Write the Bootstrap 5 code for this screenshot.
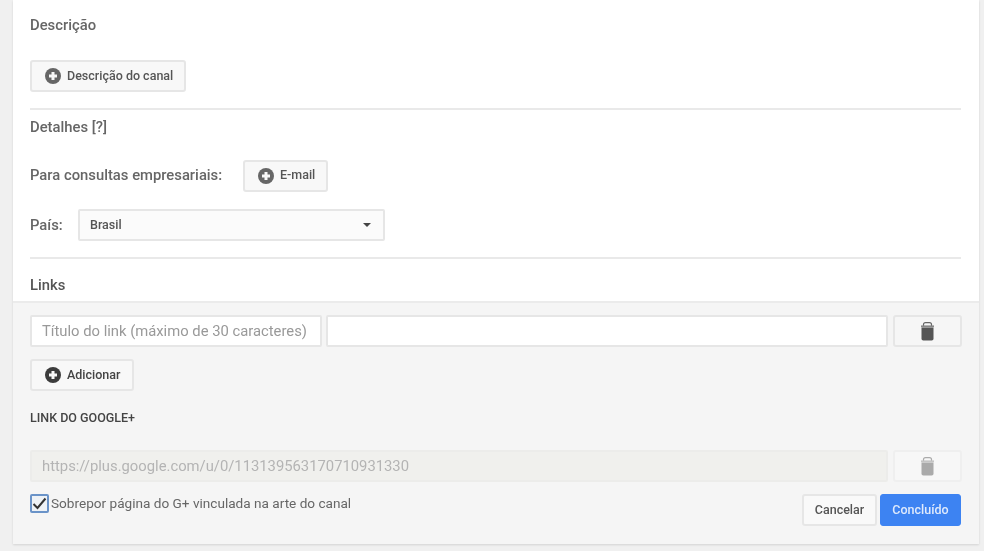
<!DOCTYPE html>
<html lang="pt-BR">
<head>
<meta charset="utf-8">
<title>Canal</title>
<link href="https://cdn.jsdelivr.net/npm/bootstrap@5.3.0/dist/css/bootstrap.min.css" rel="stylesheet">
<style>
html,body{height:100%;overflow:hidden}
body{background:#f0f0f0;font-family:Roboto,"Liberation Sans",sans-serif;color:#555;font-size:14px}
.shell{margin:0 5px 0 13px;height:544px;display:flex;flex-direction:column;box-shadow:0 1px 2px rgba(0,0,0,.12);filter:blur(.5px)}
.upper{background:#fff;height:303px;padding:0 18px 0 17px;border-bottom:2px solid #ebebeb;flex:none}
.lower{background:#f5f5f5;flex:1;padding:12px 17px 0 17px}
.head{font-size:14.8px;font-weight:500;color:#666;line-height:20px}
.rule{height:2px;background:#e9e9e9}
.yt{display:inline-flex;align-items:center;height:32px;padding:0 11px 0 13px;background:#f8f8f8;border:2px solid #e6e6e6;border-radius:3px;font-size:12.5px;font-weight:500;color:#555;line-height:1}
.yt svg{margin-right:6px;flex:none}
.dark{color:#444;padding-right:12px}
.fieldtxt{height:32px;border:2px solid #e6e6e6;border-radius:2px;background:#fff;font-size:14.8px;padding:0 10px;color:#999;font-family:inherit;outline:0;box-shadow:none}
.fieldtxt::placeholder{color:#999;opacity:1}
.fieldtxt:disabled{background:#f0f0ed;border-color:#ececea;color:#b4b4b4}
.ttl{width:292px;flex:none}
.url{flex:1;min-width:0}
.bin{width:69px;flex:none;height:32px;margin-left:5px;background:#f6f6f6;border:2px solid #e6e6e6;border-radius:3px;display:flex;align-items:center;justify-content:center;padding:0}
.bin.off{border-color:#efefef;background:#f7f7f7}
.pick{width:307px;height:32px;border:2px solid #e6e6e6;border-radius:2px;background:#fbfbfb;padding:0 12px 0 10px;font-size:12.5px;font-weight:500;color:#555}
.caret{width:0;height:0;border-left:4px solid transparent;border-right:4px solid transparent;border-top:4px solid #444}
.lbl{font-size:14.8px;font-weight:500;color:#666}
.gp{font-size:12.5px;font-weight:500;color:#444;line-height:14px}
.tick{width:19px;height:19px;border:2px solid #6a93c8;border-radius:2px;background:#eef2f6;flex:none;display:flex;align-items:center;justify-content:center;padding:0}
.ticktxt{font-size:13.6px;color:#666;line-height:19px;margin-left:2px}
.act{height:32px;font-size:12.5px;font-weight:500;border-radius:3px;padding:0;display:flex;align-items:center;justify-content:center}
.cancel{width:75px;background:#f9f9f9;border:2px solid #e6e6e6;color:#555}
.done{width:81px;background:#3d83f2;border:1px solid #3d83f2;color:#dfeafc;margin-left:3px}
</style>
</head>
<body>
<div class="shell">
  <div class="upper">
    <div class="head d-flex align-items-center" style="height:50px">Descrição</div>
    <div class="d-flex align-items-start" style="height:58px;padding-top:10px">
      <span class="yt"><svg width="16" height="16" viewBox="0 0 16 16"><circle cx="8" cy="8" r="8" fill="#666"/><path d="M8 4v8M4 8h8" stroke="#f8f8f8" stroke-width="3"/></svg>Descrição do canal</span>
    </div>
    <div class="rule"></div>
    <div class="head d-flex align-items-center" style="height:34px">Detalhes [?]</div>
    <div class="d-flex align-items-center" style="height:33px;margin-top:15px">
      <span class="lbl" style="width:213px">Para consultas empresariais:</span>
      <span class="yt"><svg width="16" height="16" viewBox="0 0 16 16"><circle cx="8" cy="8" r="8" fill="#666"/><path d="M8 4v8M4 8h8" stroke="#f8f8f8" stroke-width="3"/></svg>E-mail</span>
    </div>
    <div class="d-flex align-items-center" style="margin-top:17px">
      <span class="lbl" style="width:48px">País:</span>
      <div class="pick d-flex align-items-center justify-content-between"><span>Brasil</span><span class="caret"></span></div>
    </div>
    <div class="rule" style="margin-top:16px"></div>
    <div class="head d-flex align-items-center" style="height:39px;padding-top:12px;color:#555">Links</div>
  </div>
  <div class="lower">
    <div class="d-flex">
      <input class="fieldtxt ttl" type="text" placeholder="Título do link (máximo de 30 caracteres)">
      <input class="fieldtxt url ms-1" type="text">
      <button class="bin" type="button"><svg width="13" height="19" viewBox="0 0 13 19"><path d="M2.5 4V2.6Q2.5.7 4.5.7h4q2 0 2 1.9V4" fill="none" stroke="#666" stroke-width="1.2"/><rect x="0" y="3.4" width="13" height="1.8" fill="#888"/><path d="M.5 5.4h12v11.4q0 1.8-1.8 1.8H2.3q-1.8 0-1.8-1.8z" fill="#555"/></svg></button>
    </div>
    <div style="margin-top:12px"><span class="yt dark"><svg width="16" height="16" viewBox="0 0 16 16"><circle cx="8" cy="8" r="8" fill="#3c3c3c"/><path d="M8 4v8M4 8h8" stroke="#f8f8f8" stroke-width="3"/></svg>Adicionar</span></div>
    <div class="gp" style="margin-top:20px">LINK DO GOOGLE+</div>
    <div class="d-flex" style="margin-top:25px">
      <input class="fieldtxt ttl flex-fill w-auto" type="text" disabled value="https://plus.google.com/u/0/113139563170710931330">
      <button class="bin off" type="button" disabled><svg width="13" height="19" viewBox="0 0 13 19"><path d="M2.5 4V2.6Q2.5.7 4.5.7h4q2 0 2 1.9V4" fill="none" stroke="#aaa" stroke-width="1.2"/><rect x="0" y="3.4" width="13" height="1.8" fill="#c4c4c4"/><path d="M.5 5.4h12v11.4q0 1.8-1.8 1.8H2.3q-1.8 0-1.8-1.8z" fill="#aaa"/></svg></button>
    </div>
    <div class="d-flex justify-content-between align-items-start" style="margin-top:12px">
      <div class="d-flex align-items-center">
        <span class="tick"><svg width="15" height="13" viewBox="0 0 15 13"><path d="M1.5 7l4 4L13.5 1.5" fill="none" stroke="#333" stroke-width="2"/></svg></span>
        <span class="ticktxt">Sobrepor página do G+ vinculada na arte do canal</span>
      </div>
      <div class="d-flex" style="margin-right:1px">
        <button class="act cancel" type="button">Cancelar</button>
        <button class="act done" type="button">Concluído</button>
      </div>
    </div>
  </div>
</div>
<script src="https://cdn.jsdelivr.net/npm/bootstrap@5.3.0/dist/js/bootstrap.bundle.min.js"></script>
</body>
</html>
